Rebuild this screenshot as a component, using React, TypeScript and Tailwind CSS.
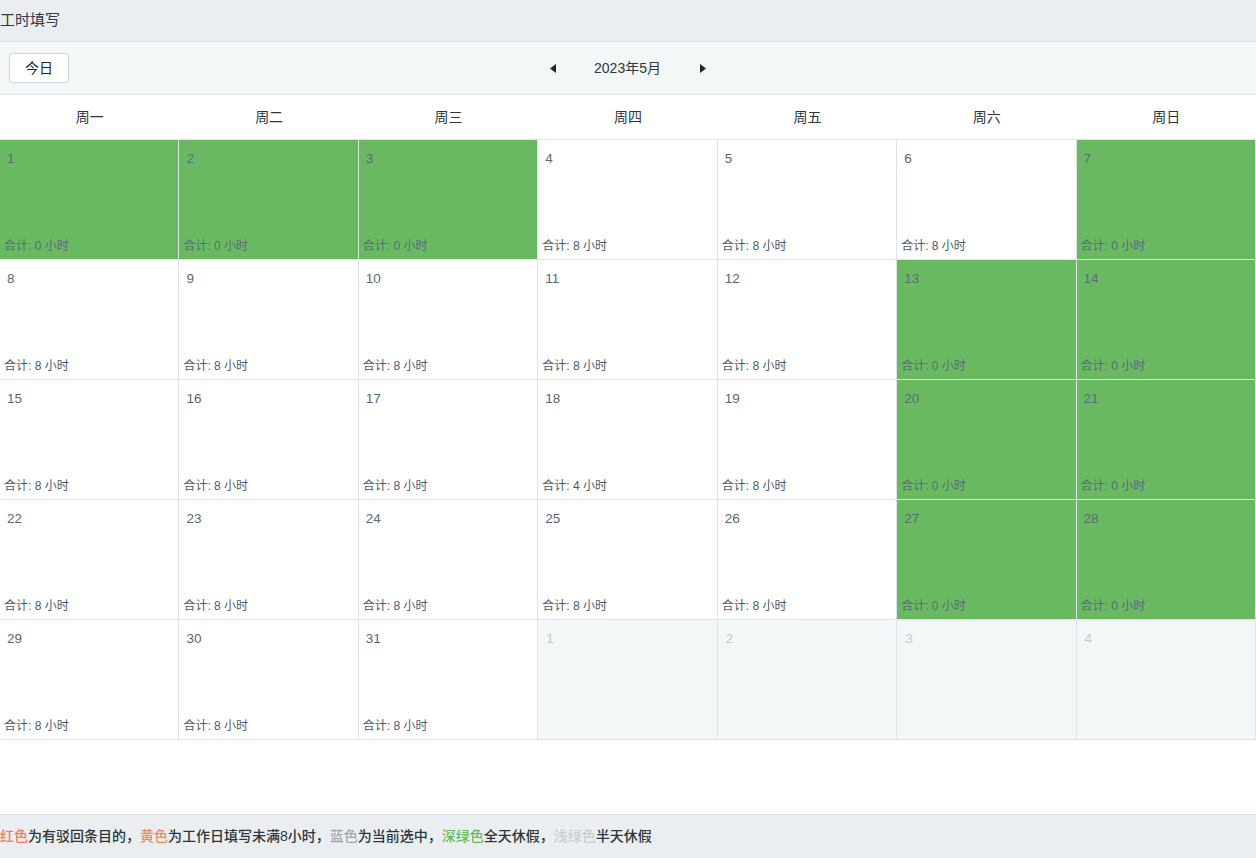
import { useState } from "react";

type Day = { day: number; hours?: number; rest?: boolean; other?: boolean };

const weekNames = ["周一", "周二", "周三", "周四", "周五", "周六", "周日"];

const restDays = [1, 2, 3, 7, 13, 14, 20, 21, 27, 28];

function buildDays(): Day[] {
  const list: Day[] = [];
  for (let d = 1; d <= 31; d++) {
    const rest = restDays.includes(d);
    list.push({ day: d, rest, hours: rest ? 0 : d === 18 ? 4 : 8 });
  }
  for (let d = 1; d <= 4; d++) list.push({ day: d, other: true });
  return list;
}

function DayCell({ item }: { item: Day }) {
  if (item.other) {
    return (
      <div className="h-[120px] flex flex-col border-r border-b border-[#dde3e8] bg-[#f4f7f8] pt-[10px]">
        <span className="pl-[8px] text-[13.5px] leading-[18px] text-[#c3c9ce]">{item.day}</span>
      </div>
    );
  }
  return (
    <div
      className={`h-[120px] flex flex-col justify-between border-r border-b border-[#dde3e8] pt-[10px] pb-[5px] ${
        item.rest ? "bg-[#69b960]" : "bg-white"
      }`}
    >
      <span
        className={`pl-[7px] text-[13.5px] leading-[18px] ${
          item.rest ? "text-[#5b6b7c]" : "text-[#5a6772]"
        }`}
      >
        {item.day}
      </span>
      <span
        className={`pl-[4px] text-[12px] leading-[16px] ${
          item.rest ? "text-[#5b6b7c]" : "text-[#4b5967]"
        }`}
      >
        合计: {item.hours} 小时
      </span>
    </div>
  );
}

function Arrow({ dir }: { dir: "left" | "right" }) {
  return (
    <svg width="6" height="9" viewBox="0 0 6 9" className="block">
      {dir === "left" ? (
        <path d="M6 0 L0 4.5 L6 9 Z" fill="#222" />
      ) : (
        <path d="M0 0 L6 4.5 L0 9 Z" fill="#222" />
      )}
    </svg>
  );
}

export default function App() {
  const [days] = useState(buildDays);

  return (
    <div
      className="w-[1256px] h-[858px] flex flex-col bg-white overflow-hidden"
      style={{ fontFamily: '"Liberation Sans", "Noto Sans CJK SC", sans-serif' }}
    >
      <div className="h-[42px] flex items-center bg-[#eaeef1] border-b border-[#dde3e8]">
        <span className="text-[15px] text-[#2f3a44]">工时填写</span>
      </div>

      <div className="h-[53px] relative flex items-center bg-[#f4f7f8] border-b border-[#dde3e8] px-[9px]">
        <button className="w-[60px] h-[30px] rounded-[3px] border border-[#cfd5da] bg-white text-[14px] text-[#222]">
          今日
        </button>
        <div className="absolute left-0 right-0 top-0 bottom-0 flex items-center justify-center pointer-events-none">
          <div className="flex items-center">
            <span className="mr-[38px]">
              <Arrow dir="left" />
            </span>
            <span className="text-[14px] text-[#2b3640]">2023年5月</span>
            <span className="ml-[39px]">
              <Arrow dir="right" />
            </span>
          </div>
        </div>
      </div>

      <div className="grid grid-cols-7 h-[45px] border-b border-[#dde3e8]">
        {weekNames.map((w) => (
          <div key={w} className="flex items-center justify-center text-[14px] text-[#2b3640]">
            {w}
          </div>
        ))}
      </div>

      <div className="grid grid-cols-7">
        {days.map((d, i) => (
          <DayCell key={i} item={d} />
        ))}
      </div>

      <div className="flex-1" />

      <div className="h-[44px] flex items-center bg-[#eaeef1] border-t border-[#dde3e8] text-[14px] font-medium text-[#2b3640]">
        <span className="text-[#f27c5c]">红色</span>
        <span>为有驳回条目的，</span>
        <span className="text-[#f08a5a]">黄色</span>
        <span>为工作日填写未满8小时，</span>
        <span className="text-[#a0a9b2]">蓝色</span>
        <span>为当前选中，</span>
        <span className="text-[#69b960]">深绿色</span>
        <span>全天休假，</span>
        <span className="text-[#c9cdd1]">浅绿色</span>
        <span>半天休假</span>
      </div>
    </div>
  );
}
